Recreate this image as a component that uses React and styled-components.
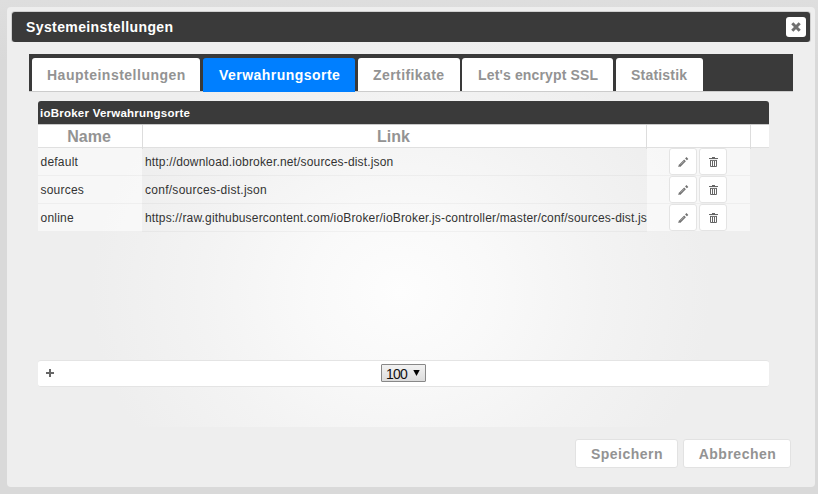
import React from 'react';
import styled, { createGlobalStyle } from 'styled-components';

const GlobalStyle = createGlobalStyle`
  * { box-sizing: border-box; }
  body {
    margin: 0;
    width: 818px;
    height: 494px;
    overflow: hidden;
    background: linear-gradient(#dedede, #d9d9d9 60px);
    font-family: "Liberation Sans", Arial, sans-serif;
    color: #333;
  }
`;

const Dialog = styled.div`
  display: flex;
  flex-direction: column;
  width: 808px;
  height: 480px;
  margin: 7px 3px 0 7px;
  padding: 5px;
  border-radius: 4px;
  background: #eee;
`;

const TitleBar = styled.header`
  display: flex;
  flex: none;
  align-items: center;
  justify-content: space-between;
  height: 30px;
  padding: 0 4px 0 14px;
  border-radius: 3px;
  background: #3a3a3a;
  box-shadow: 0 0 0 1px #cfcfcf;
`;

const Title = styled.h1`
  margin: 0;
  font-size: 14px;
  line-height: 20px;
  letter-spacing: 0.39px;
  color: #fff;
`;

const CloseButton = styled.button`
  display: grid;
  place-items: center;
  width: 20px;
  height: 20px;
  padding: 0;
  border: 0;
  border-radius: 3px;
  background: #fff;
`;

const Content = styled.main`
  flex: none;
  height: 385px;
  padding: 12px 17px 0;
  background: radial-gradient(ellipse 310px 265px at 389px 250px, #fdfdfd 0, #f9f9f9 30%, #f3f3f3 65%, #eee 100%);
`;

const TabBar = styled.nav`
  display: flex;
  align-items: flex-end;
  height: 38px;
  padding: 0 0 0 3px;
  background: #3a3a3a;
  border-bottom: 1px solid #ccc;
`;

const Tab = styled.button`
  flex: none;
  width: ${(p) => p.$width}px;
  height: 33px;
  margin: 0 ${(p) => p.$gap}px 0 0;
  padding: 0 0 0 ${(p) => p.$inset || 15}px;
  border: 0;
  border-radius: 3px 3px 0 0;
  background: ${(p) => (p.$active ? '#007fff' : '#fff')};
  box-shadow: ${(p) => (p.$active ? '0 1px 0 #007fff' : 'none')};
  color: ${(p) => (p.$active ? '#fff' : '#939393')};
  font: bold 14px/32px "Liberation Sans", Arial, sans-serif;
  letter-spacing: ${(p) => p.$spacing}px;
  text-align: left;
  white-space: nowrap;
`;

const Grid = styled.section`
  display: flex;
  flex-direction: column;
  width: 731px;
  height: 286px;
  margin: 9px 0 0 9px;
`;

const GridTitle = styled.div`
  flex: none;
  height: 23px;
  padding-left: 2px;
  border-radius: 3px 3px 0 0;
  background: #3a3a3a;
  color: #fff;
  font: bold 11.5px/24px "Liberation Sans", Arial, sans-serif;
  letter-spacing: 0.24px;
`;

const HeaderRow = styled.div`
  display: grid;
  flex: none;
  grid-template-columns: 105px 504px 104px 18px;
  height: 24px;
  border-top: 1px solid #c8c8c8;
  border-bottom: 1px solid #e0e0e0;
  background: #fff;
`;

const HeaderCell = styled.div`
  border-right: ${(p) => (p.$last ? '0' : '1px solid #ddd')};
  padding-right: 2px;
  color: #939393;
  font: bold 16px/24px "Liberation Sans", Arial, sans-serif;
  text-align: center;
`;

const Rows = styled.div`
  flex: 1;
`;

const Row = styled.div`
  display: grid;
  grid-template-columns: 104px 505px 103px;
  width: 712px;
  height: 28px;
`;

const Cell = styled.div`
  overflow: hidden;
  padding: 0 0 0 ${(p) => p.$inset || 2.5}px;
  border-bottom: 1px solid rgba(0, 0, 0, 0.035);
  background: ${(p) => (p.$shaded ? 'rgba(255, 255, 255, 0.55)' : 'transparent')};
  color: #333;
  font-size: 12px;
  line-height: 28px;
  letter-spacing: ${(p) => p.$spacing || 0}px;
  white-space: nowrap;
`;

const Actions = styled(Cell)`
  display: flex;
  gap: 2px;
  padding: 0 0 0 22px;
`;

const IconButton = styled.button`
  display: grid;
  place-items: center;
  width: 28px;
  height: 27px;
  padding: 0;
  border: 1px solid #e4e4e4;
  border-radius: 3px;
  background: #fff;
  color: #666;
`;

const Pager = styled.footer`
  display: grid;
  flex: none;
  grid-template-columns: 343px 45px 1fr;
  align-items: center;
  height: 27px;
  border: 1px solid #e4e4e4;
  border-width: 1px 0;
  border-radius: 3px;
  background: #fff;
`;

const AddButton = styled.button`
  display: grid;
  place-items: center;
  width: 24px;
  height: 24px;
  margin-top: -1px;
  padding: 0;
  border: 0;
  background: none;
`;

const PageSize = styled.div`
  display: flex;
  justify-content: space-between;
  height: 18px;
  margin-top: -2px;
  padding: 0 5px 0 4px;
  border: 1px solid #888;
  border-radius: 1px;
  background: linear-gradient(#f2f2f2, #dcdcdc);
  color: #111;
  font-size: 14px;
  line-height: 19px;
  letter-spacing: -0.8px;
`;

const Footer = styled.div`
  display: flex;
  justify-content: flex-end;
  gap: 5px;
  padding: 12px 19px 0 0;
`;

const FooterButton = styled.button`
  width: ${(p) => p.$width}px;
  height: 29px;
  padding: 1px 0 0 1px;
  border: 1px solid #e2e2e2;
  border-radius: 3px;
  background: #fff;
  color: #939393;
  font: bold 14px/27px "Liberation Sans", Arial, sans-serif;
  letter-spacing: ${(p) => p.$spacing}px;
`;

const CloseIcon = () => (
  <svg width="10" height="10" viewBox="0 0 10 10">
    <path d="M1.3 1.3 8.7 8.7M8.7 1.3 1.3 8.7" stroke="#707070" strokeWidth="3" />
  </svg>
);

const PencilIcon = () => (
  <svg width="12" height="12" viewBox="0 0 12 12" fill="none" stroke="#707070">
    <path d="M2.6 9.8 8 4.4" strokeWidth="2.4" />
    <path d="M3.6 8.6 7.2 5" stroke="#ccc" strokeWidth=".6" />
    <path d="M1.2 11 2 8.4 3.9 10.2Z" fill="#707070" stroke="none" />
    <path d="m9 3.4 1.4-1.4" strokeWidth="2.6" />
  </svg>
);

const TrashIcon = () => (
  <svg width="11" height="12" viewBox="0 0 11 12" fill="none" stroke="currentColor">
    <path d="M1 2.5h9M4 1.5h3" />
    <path d="M2.5 4v6.5h6V4M2 4.4h7M4.5 5v5M6.5 5v5" />
  </svg>
);

const PlusIcon = () => (
  <svg width="8" height="8" viewBox="0 0 8 8">
    <path d="M4 0v8M0 4h8" stroke="#666" strokeWidth="2" />
  </svg>
);

const ArrowIcon = styled.svg`
  margin-top: 5px;
`;

const tabs = [
  { label: 'Haupteinstellungen', width: 168, gap: 3, spacing: 0.5 },
  { label: 'Verwahrungsorte', width: 152, gap: 3, spacing: 0.46, inset: 16, active: true },
  { label: 'Zertifikate', width: 102, gap: 2, spacing: 0.42 },
  { label: "Let's encrypt SSL", width: 151, gap: 3, spacing: 0.15, inset: 16 },
  { label: 'Statistik', width: 87, gap: 0, spacing: 0.2 },
];

const repositories = [
  { name: 'default', link: 'http://download.iobroker.net/sources-dist.json', spacing: 0.165 },
  { name: 'sources', link: 'conf/sources-dist.json', spacing: 0.27 },
  {
    name: 'online',
    link: 'https://raw.githubusercontent.com/ioBroker/ioBroker.js-controller/master/conf/sources-dist.json',
    spacing: 0.17,
  },
];

export default function App() {
  return (
    <>
      <GlobalStyle />
      <Dialog>
        <TitleBar>
          <Title>Systemeinstellungen</Title>
          <CloseButton aria-label="Schließen"><CloseIcon /></CloseButton>
        </TitleBar>
        <Content>
          <TabBar>
            {tabs.map((t) => (
              <Tab key={t.label} $width={t.width} $gap={t.gap} $spacing={t.spacing} $inset={t.inset} $active={t.active}>
                {t.label}
              </Tab>
            ))}
          </TabBar>
          <Grid>
            <GridTitle>ioBroker Verwahrungsorte</GridTitle>
            <HeaderRow>
              <HeaderCell>Name</HeaderCell>
              <HeaderCell>Link</HeaderCell>
              <HeaderCell />
              <HeaderCell $last />
            </HeaderRow>
            <Rows>
              {repositories.map((r) => (
                <Row key={r.name}>
                  <Cell $shaded $spacing={0.22}>{r.name}</Cell>
                  <Cell $inset={3} $spacing={r.spacing}>{r.link}</Cell>
                  <Actions $shaded>
                    <IconButton aria-label="Bearbeiten"><PencilIcon /></IconButton>
                    <IconButton aria-label="Löschen"><TrashIcon /></IconButton>
                  </Actions>
                </Row>
              ))}
            </Rows>
            <Pager>
              <AddButton aria-label="Hinzufügen"><PlusIcon /></AddButton>
              <PageSize>
                100
                <ArrowIcon width="7" height="7" viewBox="0 0 7 7">
                  <path d="M.3 0h6.4L3.5 6Z" fill="#000" />
                </ArrowIcon>
              </PageSize>
            </Pager>
          </Grid>
        </Content>
        <Footer>
          <FooterButton $width={103} $spacing={0.5}>Speichern</FooterButton>
          <FooterButton $width={108} $spacing={0.5}>Abbrechen</FooterButton>
        </Footer>
      </Dialog>
    </>
  );
}
